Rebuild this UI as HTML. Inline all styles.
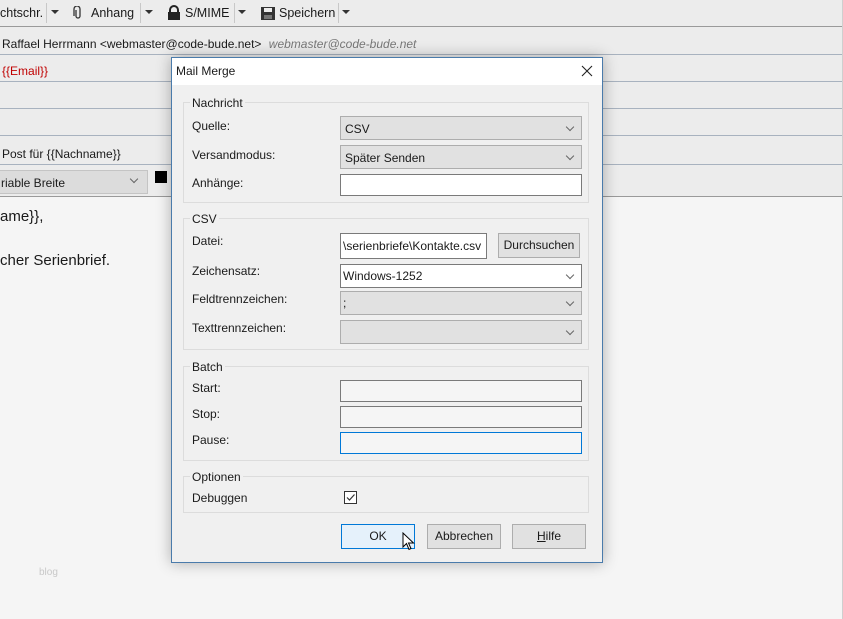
<!DOCTYPE html>
<html><head><meta charset="utf-8"><style>
*{box-sizing:border-box;margin:0;padding:0}
body{width:843px;height:619px;overflow:hidden;background:#f5f5f5;font-family:"Liberation Sans",sans-serif;font-size:12px;color:#1a1a1a;position:relative}
.a{position:absolute;white-space:nowrap}
.hl{position:absolute;left:0;width:842px;height:1px;background:#a8b2bf}
.tb{position:absolute;left:0;top:0;width:842px;height:196px;background:#ececec}
.sep{position:absolute;width:1px;height:20px;top:3px;background:#c8c8c8}
.dd{position:absolute;top:10px;width:0;height:0;border-left:4px solid transparent;border-right:4px solid transparent;border-top:4px solid #333}
.dlg{position:absolute;left:171px;top:57px;width:432px;height:506px;background:#f0f0f0;border:1px solid #4a7bab;box-shadow:0 0 14px rgba(0,0,0,.3)}
.gb{position:absolute;border:1px solid #dcdcdc}
.gt{position:absolute;background:#f0f0f0;padding:0 2px;font-size:12px}
.sel{position:absolute;height:24px;background:#e1e1e1;border:1px solid #adadad;padding:5px 4px;font-size:12px}
.sel.w{background:#fff;border-color:#7a7a7a}
.sel:after{content:"";position:absolute;right:8px;top:7px;width:5px;height:5px;border-right:1px solid #666;border-bottom:1px solid #666;transform:rotate(45deg)}
.inp{position:absolute;height:22px;background:#fff;border:1px solid #7a7a7a}
.btn{position:absolute;height:25px;background:#e1e1e1;border:1px solid #adadad;text-align:center;line-height:23px;font-size:12px}
</style></head><body>
<div class="tb"></div>
<div class="hl" style="top:26px;background:#9a9a9a"></div>
<div class="hl" style="top:54px"></div>
<div class="hl" style="top:81px"></div>
<div class="hl" style="top:108px"></div>
<div class="hl" style="top:135px"></div>
<div class="hl" style="top:164px"></div>
<div class="hl" style="top:196px;background:#9a9a9a"></div>
<div style="position:absolute;left:842px;top:0;width:1px;height:619px;background:#cfcfcf"></div>
<div class="a" style="left:0;top:6px;font-size:12.5px">chtschr.</div>
<div class="sep" style="left:46px"></div>
<div class="dd" style="left:51px"></div>
<svg class="a" style="left:73px;top:6px" width="10" height="14"><path d="M3 4v6a2 2 0 0 0 4 0V3a3 3 0 0 0-6 0v7" fill="none" stroke="#333" stroke-width="1.3"/></svg>
<div class="a" style="left:91px;top:6px;font-size:12.5px">Anhang</div>
<div class="sep" style="left:140px"></div>
<div class="dd" style="left:145px"></div>
<svg class="a" style="left:167px;top:5px" width="14" height="16"><path d="M3 7V5a4 4 0 0 1 8 0v2" fill="none" stroke="#222" stroke-width="2"/><rect x="1" y="7" width="12" height="8" fill="#222"/></svg>
<div class="a" style="left:185px;top:6px;font-size:12.5px">S/MIME</div>
<div class="sep" style="left:234px"></div>
<div class="dd" style="left:238px"></div>
<svg class="a" style="left:260px;top:5px" width="16" height="16"><rect x="1" y="2" width="14" height="13" fill="#333"/><rect x="4" y="3" width="8" height="4" fill="#ececec"/><rect x="4" y="10" width="8" height="4" fill="#777"/></svg>
<div class="a" style="left:279px;top:6px;font-size:12.5px">Speichern</div>
<div class="sep" style="left:338px"></div>
<div class="dd" style="left:342px"></div>
<div class="a" style="left:2px;top:37px;font-size:12px">Raffael Herrmann &lt;webmaster@code-bude.net&gt; <span style="color:#777;font-style:italic;margin-left:4px">webmaster@code-bude.net</span></div>
<div class="a" style="left:2px;top:64px;color:#c00000">{{Email}}</div>
<div class="a" style="left:2px;top:147px">Post für {{Nachname}}</div>
<div class="a" style="left:-2px;top:170px;width:150px;height:24px;background:#dcdcdc;border:1px solid #c4c4c4;padding:5px 0 0 2px">riable Breite<span style="position:absolute;right:10px;top:5px;width:6px;height:6px;border-right:1px solid #666;border-bottom:1px solid #666;transform:rotate(45deg)"></span></div>
<div class="a" style="left:155px;top:171px;width:12px;height:12px;background:#000"></div>
<div class="a" style="left:0;top:208px;font-size:15px">ame}},</div>
<div class="a" style="left:0;top:252px;font-size:15px">cher Serienbrief.</div>
<div class="a" style="left:39px;top:567px;font-size:10px;color:#c8c8c8">blog</div>

<div class="dlg">
<div style="position:absolute;left:0;top:0;width:430px;height:27px;background:#fff"></div>
<div class="a" style="left:4px;top:6px;font-size:12px">Mail Merge</div>
<svg class="a" style="left:409px;top:7px" width="12" height="12"><path d="M1 1l10 10M11 1L1 11" stroke="#222" stroke-width="1.1"/></svg>

<div class="gb" style="left:11px;top:44px;width:406px;height:101px"></div><div class="gt" style="left:18px;top:38px">Nachricht</div>
<div class="a" style="left:20px;top:61px">Quelle:</div>
<div class="a" style="left:20px;top:90px">Versandmodus:</div>
<div class="a" style="left:20px;top:118px">Anhänge:</div>
<div class="sel" style="left:168px;top:58px;width:242px">CSV</div>
<div class="sel" style="left:168px;top:87px;width:242px">Später Senden</div>
<div class="inp" style="left:168px;top:116px;width:242px"></div>

<div class="gb" style="left:11px;top:160px;width:406px;height:132px"></div><div class="gt" style="left:18px;top:154px">CSV</div>
<div class="a" style="left:20px;top:176px">Datei:</div>
<div class="a" style="left:20px;top:206px">Zeichensatz:</div>
<div class="a" style="left:20px;top:234px">Feldtrennzeichen:</div>
<div class="a" style="left:20px;top:263px">Texttrennzeichen:</div>
<div class="inp" style="left:168px;top:175px;width:147px;height:26px;padding:5px 0 0 2px;overflow:hidden">\serienbriefe\Kontakte.csv</div>
<div class="btn" style="left:326px;top:175px;width:82px">Durchsuchen</div>
<div class="sel w" style="left:168px;top:206px;width:242px;padding:4px 2px">Windows-1252</div>
<div class="sel" style="left:168px;top:233px;width:242px;padding:4px 2px">;</div>
<div class="sel" style="left:168px;top:262px;width:242px"></div>

<div class="gb" style="left:11px;top:308px;width:406px;height:95px"></div><div class="gt" style="left:18px;top:302px">Batch</div>
<div class="a" style="left:20px;top:323px">Start:</div>
<div class="a" style="left:20px;top:349px">Stop:</div>
<div class="a" style="left:20px;top:375px">Pause:</div>
<div class="inp" style="left:168px;top:322px;width:242px;background:#f5f5f5"></div>
<div class="inp" style="left:168px;top:348px;width:242px;background:#f5f5f5"></div>
<div class="inp" style="left:168px;top:374px;width:242px;background:#f5f5f5;border-color:#0078d7"></div>

<div class="gb" style="left:11px;top:418px;width:406px;height:37px"></div><div class="gt" style="left:18px;top:412px">Optionen</div>
<div class="a" style="left:20px;top:433px">Debuggen</div>
<div class="a" style="left:172px;top:433px;width:13px;height:13px;border:1px solid #333;background:#fff"></div>
<svg class="a" style="left:173px;top:434px" width="11" height="11"><path d="M2 5.5l2.5 2.5L9.5 2.5" fill="none" stroke="#333" stroke-width="1.2"/></svg>

<div class="btn" style="left:169px;top:466px;width:74px;background:#e5f1fb;border-color:#0078d7">OK</div>
<svg class="a" style="left:230px;top:474px" width="14" height="20"><path d="M1 1v14l3.5-3.5 2.5 6 2-1-2.5-5.5h5z" fill="#fff" stroke="#000" stroke-width="1"/></svg>
<div class="btn" style="left:255px;top:466px;width:74px">Abbrechen</div>
<div class="btn" style="left:340px;top:466px;width:74px"><u>H</u>ilfe</div>
</div>
</body></html>
